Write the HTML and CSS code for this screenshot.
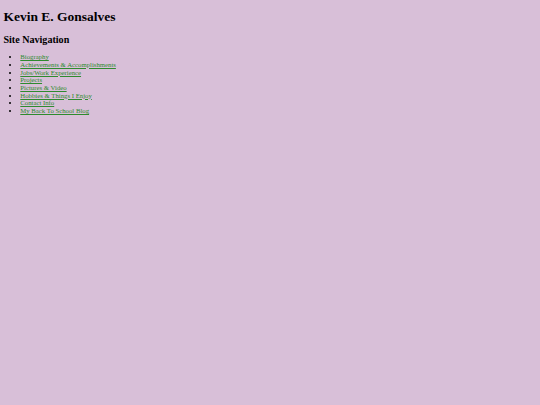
FILE: index.html
```html
<!DOCTYPE html>
<html>
<head>
<meta charset="utf-8">
<title>Kevin E. Gonsalves</title>
<link rel="stylesheet" href="styles.css">
</head>
<body>
<h1 class="title">Kevin E. Gonsalves</h1>
<h2 class="nav-title">Site Navigation</h2>
<ul class="nav">
<li><a href="#">Biography</a></li>
<li><a href="#">Achievements &amp; Accomplishments</a></li>
<li><a href="#">Jobs/Work Experience</a></li>
<li><a href="#">Projects</a></li>
<li><a href="#">Pictures &amp; Video</a></li>
<li><a href="#">Hobbies &amp; Things I Enjoy</a></li>
<li><a href="#">Contact Info</a></li>
<li><a href="#">My Back To School Blog</a></li>
</ul>
</body>
</html>
```

FILE: styles.css
```css
html {
  background: #d8bfd8;
}
body {
  margin: 0 3.4px;
  padding-top: 0.1px;
  font-family: "Liberation Serif", "Times New Roman", serif;
  font-size: 6.75px;
  line-height: 7.7px;
  color: #000;
}
.title {
  font-size: 13.5px;
  line-height: 15.5px;
  margin: 8.5px 0 10px;
}
.nav-title {
  font-size: 10.1px;
  line-height: 11.6px;
  margin: 0;
}
.nav {
  margin: 7.5px 0;
  padding-left: 16.9px;
}
.nav a {
  color: #2e8b2e;
  text-decoration-thickness: 0.5px;
  text-underline-offset: 1px;
}
```
